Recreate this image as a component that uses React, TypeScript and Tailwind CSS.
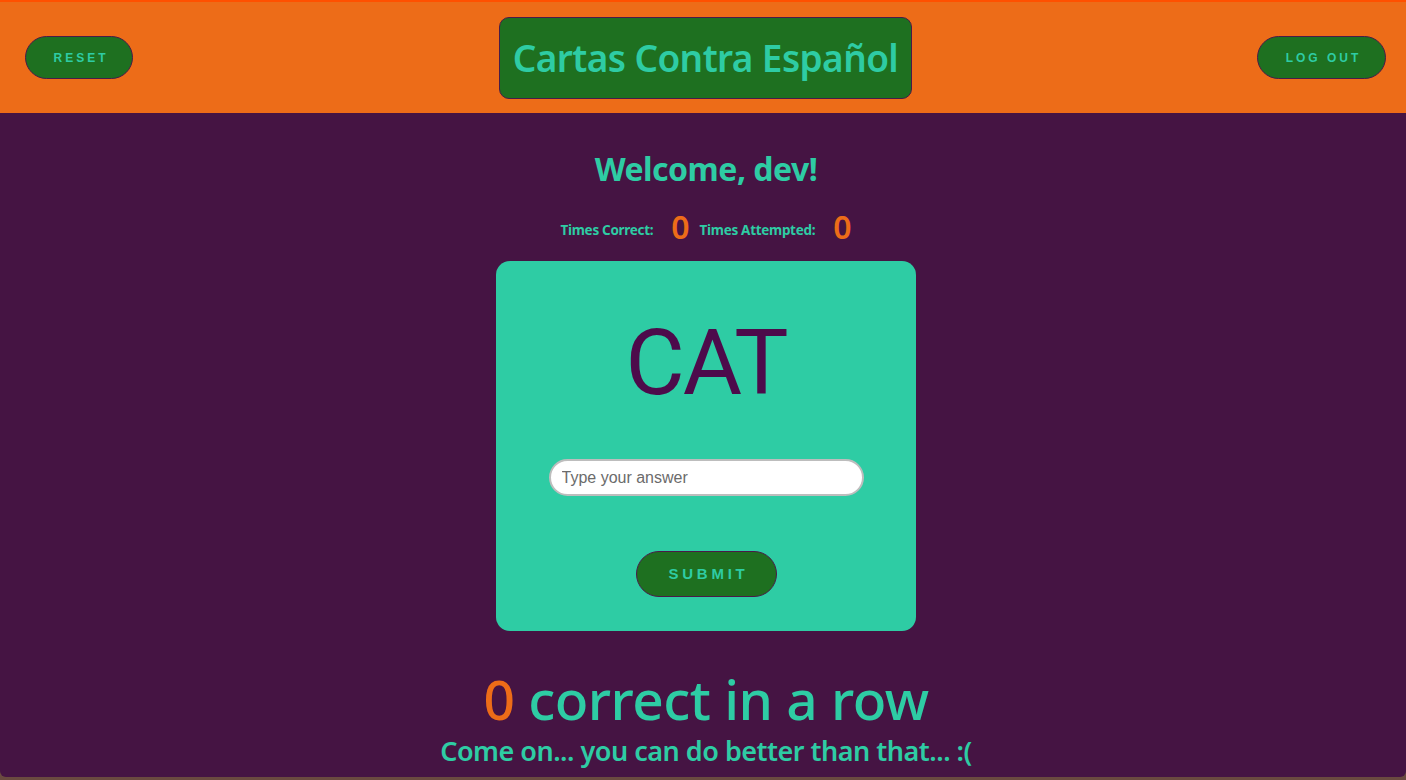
import React from "react";

const display = "font-['Noto_Sans','Open_Sans',sans-serif]";
const pill =
  "rounded-full border border-[#4a1a48] bg-[#1e7020] font-['Liberation_Sans',Arial,sans-serif] font-bold uppercase text-[#2ecca4] tracking-[0.25em]";

export default function App() {
  return (
    <div className={`flex h-[780px] flex-col bg-[#6a4a40] ${display}`}>
      <header className="grid h-[113px] shrink-0 grid-cols-[1fr_auto_1fr] items-center border-t-2 border-[#ff5000] bg-[#ed6c18] pl-[25px] pr-[20px]">
        <button className={`${pill} h-[43px] w-[108px] justify-self-start pl-[4px] text-[12px]`}>Reset</button>
        <div className="flex h-[82px] w-[413px] items-center justify-center rounded-[10px] border border-[#4a1a48] bg-[#1e7020]">
          <h1 className="text-[37px] font-semibold tracking-[-0.6px] text-[#2ecca4]">Cartas Contra Español</h1>
        </div>
        <button className={`${pill} h-[43px] w-[129px] justify-self-end pl-[4px] text-[12px]`}>Log Out</button>
      </header>

      <main className="flex h-[664px] shrink-0 flex-col items-center rounded-b-[6px] bg-[#451443] pl-[6px] pt-[36px]">
        <h2 className="text-[32px] leading-[40px] font-bold tracking-[-0.5px] text-[#2ecca4]">Welcome, dev!</h2>
        <div className="mt-[22px] flex items-end gap-[10px] text-[#2ecca4]">
          <span className="pb-[3px] text-[13.5px] font-bold tracking-[-0.3px]">Times Correct:</span>
          <span className="ml-[8px] text-[32px] leading-[32px] font-semibold text-[#ed6c18]">0</span>
          <span className="pb-[3px] text-[13.5px] font-bold tracking-[-0.3px]">Times Attempted:</span>
          <span className="ml-[8px] text-[32px] leading-[32px] font-semibold text-[#ed6c18]">0</span>
        </div>

        <section className="mt-[18px] flex h-[370px] w-[420px] flex-col items-center rounded-[14px] bg-[#2ecca4]">
          <p className="mt-[52px] font-['Roboto',sans-serif] text-[91px] leading-[100px] tracking-[-2px] text-[#4d0b4b]">CAT</p>
          <input
            placeholder="Type your answer"
            className="mt-[46px] h-[37px] w-[315px] rounded-full border-2 border-[#bdbdbd] bg-white px-[11px] font-['Liberation_Sans',Arial,sans-serif] text-[16px] text-[#333] outline-none placeholder:text-[#6b6b6b]"
          />
          <button className={`${pill} mt-[55px] h-[46px] w-[141px] pl-[5px] text-[15px]`}>Submit</button>
        </section>

        <p className="mt-[36px] text-[55px] leading-[64px] font-medium tracking-[-0.5px] text-[#2ecca4]">
          <span className="text-[#ed6c18]">0</span> correct in a row
        </p>
        <p className="mt-[2px] text-[27px] leading-[36px] font-semibold tracking-[-0.5px] text-[#2ecca4]">
          Come on... you can do better than that... :(
        </p>
      </main>
    </div>
  );
}
